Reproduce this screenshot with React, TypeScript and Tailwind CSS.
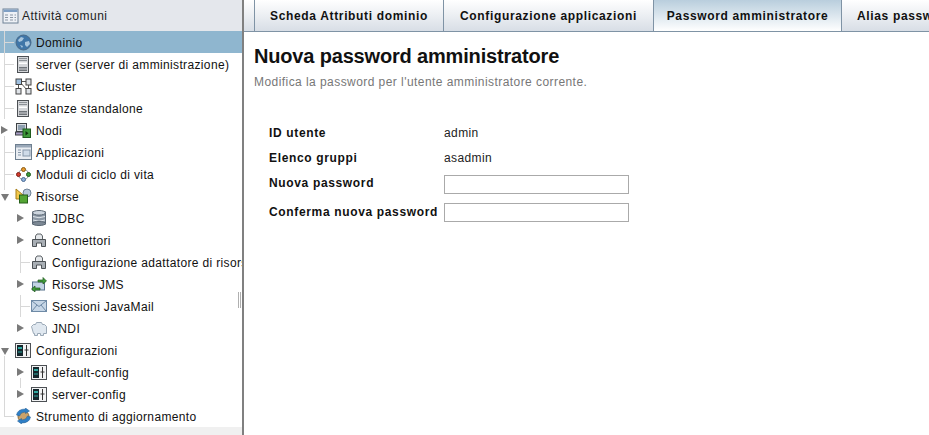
import React from 'react';

const sans = "font-['Liberation_Sans',Arial,sans-serif]";

type IconName = 'globe' | 'server' | 'cluster' | 'node' | 'apps' | 'lifecycle' | 'resources' | 'db' | 'connector' | 'jms' | 'mail' | 'jndi' | 'config' | 'update' | 'tasks';

function Icon({ name }: { name: IconName }) {
  switch (name) {
    case 'tasks':
      return (
        <svg width="17" height="16" viewBox="0 0 17 16">
          <rect x="1" y="1" width="15" height="14" fill="#eef1f6" stroke="#6f8296" />
          <rect x="1.5" y="1.5" width="14" height="2.5" fill="#7f9fc4" />
          <path d="M3 7h3M8 7h3M12.5 7h1.5M3 9.5h3M8 9.5h3M12.5 9.5h1.5M3 12h3M8 12h3M12.5 12h1.5" stroke="#8b97a5" />
        </svg>
      );
    case 'globe':
      return (
        <svg width="17" height="17" viewBox="0 0 17 17">
          <circle cx="8.5" cy="8.5" r="7.5" fill="#3f76a8" stroke="#4a6a88" />
          <path d="M3 6l3-3 3 1-2 3-3 1zM10 8l4-1 1 3-3 3-2-2zM5 11l3 1-1 2z" fill="#a8c6de" />
        </svg>
      );
    case 'server':
      return (
        <svg width="12" height="17" viewBox="0 0 12 17">
          <rect x="0.5" y="0.5" width="11" height="16" fill="#d4d6d9" stroke="#4c5054" />
          <path d="M2 2.5h8M2 4.5h8" stroke="#8c9196" />
          <rect x="2" y="6.5" width="8" height="1.5" fill="#fff" />
          <path d="M2 11.5h8M2 13h8M2 14.5h8" stroke="#70757a" />
        </svg>
      );
    case 'cluster':
      return (
        <svg width="17" height="17" viewBox="0 0 17 17">
          <path d="M5 4l7 8M7 3.5h4M3.5 7v3M13.5 7v3" stroke="#555" />
          <rect x="1" y="1" width="5.5" height="5.5" fill="#9fc0e0" stroke="#444" />
          <rect x="11" y="1" width="5" height="6" fill="#dfe3e8" stroke="#444" />
          <rect x="1" y="10.5" width="5" height="5.5" fill="#dfe3e8" stroke="#444" />
          <rect x="11" y="10.5" width="5" height="5.5" fill="#dfe3e8" stroke="#444" />
        </svg>
      );
    case 'node':
      return (
        <svg width="16" height="16" viewBox="0 0 16 16">
          <rect x="1.5" y="1.5" width="10" height="8" fill="#d8dce0" stroke="#3d4145" />
          <rect x="3" y="3" width="7" height="5" fill="#8fa0b0" />
          <rect x="0.5" y="10" width="10" height="3" fill="#a79cc4" stroke="#3d4145" />
          <rect x="8" y="7" width="7.5" height="8.5" fill="#3f9a3a" stroke="#1f5a1c" />
          <path d="M10.5 9l3 2.2-3 2.2z" fill="#10300f" />
        </svg>
      );
    case 'apps':
      return (
        <svg width="17" height="16" viewBox="0 0 17 16">
          <rect x="0.5" y="0.5" width="16" height="15" fill="#e9edf2" stroke="#6e7f90" />
          <rect x="1" y="1" width="15" height="2.5" fill="#9aa8b8" />
          <path d="M3 6h3M3 8.5h3M3 11h3" stroke="#8798aa" />
          <rect x="8" y="6" width="7" height="6" fill="#cfdbe8" stroke="#8798aa" />
        </svg>
      );
    case 'lifecycle':
      return (
        <svg width="15" height="15" viewBox="0 0 15 15">
          <circle cx="7.5" cy="7.5" r="5.2" fill="none" stroke="#9aa3ad" />
          <circle cx="7.5" cy="2.5" r="2" fill="#e89a2c" stroke="#8a5a12" />
          <circle cx="2.5" cy="7.5" r="2" fill="#d23a2c" stroke="#7a1c14" />
          <circle cx="12.5" cy="7.5" r="2" fill="#3c9a3c" stroke="#1d5a1d" />
          <circle cx="7.5" cy="12.5" r="2" fill="#8fb2dc" stroke="#4a6a92" />
        </svg>
      );
    case 'resources':
      return (
        <svg width="17" height="16" viewBox="0 0 17 16">
          <path d="M1 1l7 6v4H1z" fill="#f2c94c" stroke="#a87f18" />
          <circle cx="12" cy="5" r="4" fill="#b8c8da" stroke="#6f8296" />
          <rect x="4.5" y="7" width="8" height="8" fill="#54a534" stroke="#27601a" />
        </svg>
      );
    case 'db':
      return (
        <svg width="14" height="16" viewBox="0 0 14 16">
          <rect x="0.5" y="2" width="13" height="12" fill="#8d99a6" stroke="#5b6773" />
          <ellipse cx="7" cy="2.8" rx="6.5" ry="2.3" fill="#cdd5de" stroke="#5b6773" />
          <path d="M1 6.5q6 2.5 12 0M1 10q6 2.5 12 0" fill="none" stroke="#dfe4ea" />
          <ellipse cx="7" cy="13.5" rx="6.5" ry="2" fill="#7d8995" stroke="#5b6773" />
        </svg>
      );
    case 'connector':
      return (
        <svg width="14" height="14" viewBox="0 0 14 14">
          <path d="M3.5 6V3l1.5-2h4l1.5 2v3" fill="#e5e8eb" stroke="#5f6468" />
          <path d="M0.5 6.5h13V13.5h-4V10h-5v3.5h-4z" fill="#a9afb5" stroke="#4d5256" />
        </svg>
      );
    case 'jms':
      return (
        <svg width="16" height="15" viewBox="0 0 16 15">
          <rect x="1.5" y="5" width="12" height="8" fill="#c2d3e4" stroke="#59728c" />
          <path d="M7 3h5V0.5L15.5 4 12 7V5H7z" fill="#3f9a3a" stroke="#1f5a1c" strokeWidth="0.7" />
          <path d="M9 11H4V9L0.5 12 4 15v-2h5z" fill="#3f9a3a" stroke="#1f5a1c" strokeWidth="0.7" />
        </svg>
      );
    case 'mail':
      return (
        <svg width="16" height="12" viewBox="0 0 16 12">
          <rect x="0.5" y="0.5" width="15" height="11" fill="#c6d6e6" stroke="#6e8aa6" />
          <path d="M1 1l7 5.5L15 1M1 11l5-6M15 11l-5-6" fill="none" stroke="#6e8aa6" />
        </svg>
      );
    case 'jndi':
      return (
        <svg width="16" height="15" viewBox="0 0 16 15">
          <path d="M0.5 5.5l2-2h2l1-2h5l1 2h2l2 2v7h-3v2h-3v-2h-3v2h-3v-2h-1z" fill="#e0e8f0" stroke="#9aa8b6" />
        </svg>
      );
    case 'config':
      return (
        <svg width="16" height="15" viewBox="0 0 16 15">
          <rect x="0.5" y="0.5" width="15" height="14" fill="#f2f3f4" stroke="#4c5054" />
          <rect x="2" y="2" width="6" height="11" fill="#15262c" />
          <rect x="3" y="4" width="4" height="2" fill="#2fa8a0" />
          <path d="M3 9h4" stroke="#2fa8a0" />
          <path d="M11.5 2v11M9.5 7h4" stroke="#333" />
        </svg>
      );
    case 'update':
      return (
        <svg width="17" height="16" viewBox="0 0 16 16">
          <circle cx="8" cy="8.5" r="5.5" fill="#caa26a" stroke="#8a6a3a" />
          <path d="M1 7q1-6 9-6V0l4 3-4 2.5V4Q5 4 4 8zM15 9q-1 6-9 6v1l-4-3 4-2.5V12q5 0 6-4z" fill="#2f7fc6" stroke="#1c5a92" strokeWidth="0.5" />
        </svg>
      );
  }
}

type Item = {
  label: string;
  icon: IconName;
  depth: 0 | 1;
  arrow?: 'right' | 'down';
  selected?: boolean;
};

const items: Item[] = [
  { label: 'Dominio', icon: 'globe', depth: 0, selected: true },
  { label: 'server (server di amministrazione)', icon: 'server', depth: 0 },
  { label: 'Cluster', icon: 'cluster', depth: 0 },
  { label: 'Istanze standalone', icon: 'server', depth: 0 },
  { label: 'Nodi', icon: 'node', depth: 0, arrow: 'right' },
  { label: 'Applicazioni', icon: 'apps', depth: 0 },
  { label: 'Moduli di ciclo di vita', icon: 'lifecycle', depth: 0 },
  { label: 'Risorse', icon: 'resources', depth: 0, arrow: 'down' },
  { label: 'JDBC', icon: 'db', depth: 1, arrow: 'right' },
  { label: 'Connettori', icon: 'connector', depth: 1, arrow: 'right' },
  { label: 'Configurazione adattatore di risorse', icon: 'connector', depth: 1 },
  { label: 'Risorse JMS', icon: 'jms', depth: 1, arrow: 'right' },
  { label: 'Sessioni JavaMail', icon: 'mail', depth: 1 },
  { label: 'JNDI', icon: 'jndi', depth: 1, arrow: 'right' },
  { label: 'Configurazioni', icon: 'config', depth: 0, arrow: 'down' },
  { label: 'default-config', icon: 'config', depth: 1, arrow: 'right' },
  { label: 'server-config', icon: 'config', depth: 1, arrow: 'right' },
  { label: 'Strumento di aggiornamento', icon: 'update', depth: 0 },
];

function TreeRow({ item }: { item: Item }) {
  const indent = item.depth === 1;
  return (
    <div className={`relative flex h-[22px] items-center whitespace-nowrap ${item.selected ? 'bg-[#8fb6cf]' : ''}`}>
      {/* connector lines */}
      {!item.arrow && (
        <div className={`absolute top-[11px] h-px bg-[#d8d8d8] ${indent ? 'left-[21px] w-[9px]' : 'left-[5px] w-[9px]'}`} />
      )}
      {!item.arrow && indent && <div className="absolute left-[20px] top-0 h-[22px] w-px bg-[#d8d8d8]" />}
      {item.arrow && (
        <span
          className={`absolute ${indent ? 'left-[17px]' : 'left-[1px]'} ${
            item.arrow === 'right'
              ? 'top-[7px] border-y-[4px] border-l-[7px] border-y-transparent border-l-[#7a7a7a]'
              : 'top-[9px] border-x-[4px] border-t-[7px] border-x-transparent border-t-[#7a7a7a]'
          } h-0 w-0`}
        />
      )}
      <div className={`flex h-[18px] w-[18px] shrink-0 items-center justify-center ${indent ? 'ml-[30px]' : 'ml-[14px]'}`}>
        <Icon name={item.icon} />
      </div>
      <span className="ml-[4px] pt-[2px] text-[12px] tracking-[0.35px] text-[#111]">{item.label}</span>
    </div>
  );
}

const tabs = [
  { label: 'Scheda Attributi dominio', w: 'w-[189px] justify-center' },
  { label: 'Configurazione applicazioni', w: 'w-[210px] justify-center' },
  { label: 'Password amministratore', w: 'w-[188px] justify-center', active: true },
  { label: 'Alias password', w: 'w-[120px] pl-[15px]' },
];

function Field({ label, h, children }: { label: string; h: string; children: React.ReactNode }) {
  return (
    <div className={`flex items-start ${h}`}>
      <div className="w-[175px] text-[12px] font-bold leading-[16px] tracking-[0.65px] text-[#111]">{label}</div>
      {children}
    </div>
  );
}

export default function App() {
  return (
    <div className={`${sans} flex h-[435px] w-[929px] overflow-hidden bg-white`}>
      <aside className="flex h-full w-[244px] shrink-0 flex-col overflow-hidden border-r-2 border-[#808080]">
        <div className="flex h-[31px] shrink-0 items-center bg-[#e4e7ec] pl-[2px]">
          <Icon name="tasks" />
          <span className="ml-[3px] text-[12px] tracking-[0.5px] text-[#222]">Attività comuni</span>
        </div>
        <div className="relative flex-1 overflow-hidden">
          {items.map((item) => (
            <TreeRow key={item.label} item={item} />
          ))}
          {/* root guide lines */}
          <div className="absolute left-[4px] top-0 h-[88px] w-px bg-[#d8d8d8]" />
          <div className="absolute left-[4px] top-[105px] h-[54px] w-px bg-[#d8d8d8]" />
          <div className="absolute left-[4px] top-[325px] h-[61px] w-px bg-[#d8d8d8]" />
          <div className="absolute left-[20px] top-[347px] h-[10px] w-px bg-[#d8d8d8]" />
          {/* splitter grip */}
          <div className="absolute right-[1px] top-[261px] h-[16px] w-[3px] border-x border-[#b0b0b0]" />
        </div>
        <div className="h-[8px] shrink-0 bg-[#f0f0f0]" />
      </aside>
      <main className="min-w-0 flex-1">
        <div className="flex h-[32px] overflow-hidden border-b border-[#7f93a5] bg-gradient-to-b from-white to-[#d8dee6] pl-[10px]">
          {tabs.map((tab) => (
            <div
              key={tab.label}
              className={`flex shrink-0 items-center whitespace-nowrap border-l border-[#7f93a5] text-[12px] font-bold tracking-[0.65px] text-[#111] ${tab.w} ${
                tab.active ? 'bg-gradient-to-b from-[#b9cedd] to-white' : ''
              }`}
            >
              {tab.label}
            </div>
          ))}
        </div>
        <div className="pl-[10px]">
          <h1 className="mt-[12px] text-[20px] font-bold leading-[24px] tracking-[-0.17px] text-[#111]">Nuova password amministratore</h1>
          <p className="mt-[6px] text-[12px] leading-[16px] tracking-[0.44px] text-[#777]">Modifica la password per l'utente amministratore corrente.</p>
          <div className="ml-[15px] mt-[35px]">
            <Field label="ID utente" h="h-[25px]">
              <span className="text-[12px] leading-[16px] tracking-[0.4px] text-[#222]">admin</span>
            </Field>
            <Field label="Elenco gruppi" h="h-[25px]">
              <span className="text-[12px] leading-[16px] tracking-[0.4px] text-[#222]">asadmin</span>
            </Field>
            <Field label="Nuova password" h="h-[29px]">
              <input type="password" className="h-[19px] w-[185px] border border-[#aaa] bg-white" />
            </Field>
            <Field label="Conferma nuova password" h="h-[25px]">
              <input type="password" className="mt-[-1px] h-[19px] w-[185px] border border-[#aaa] bg-white" />
            </Field>
          </div>
        </div>
      </main>
    </div>
  );
}
